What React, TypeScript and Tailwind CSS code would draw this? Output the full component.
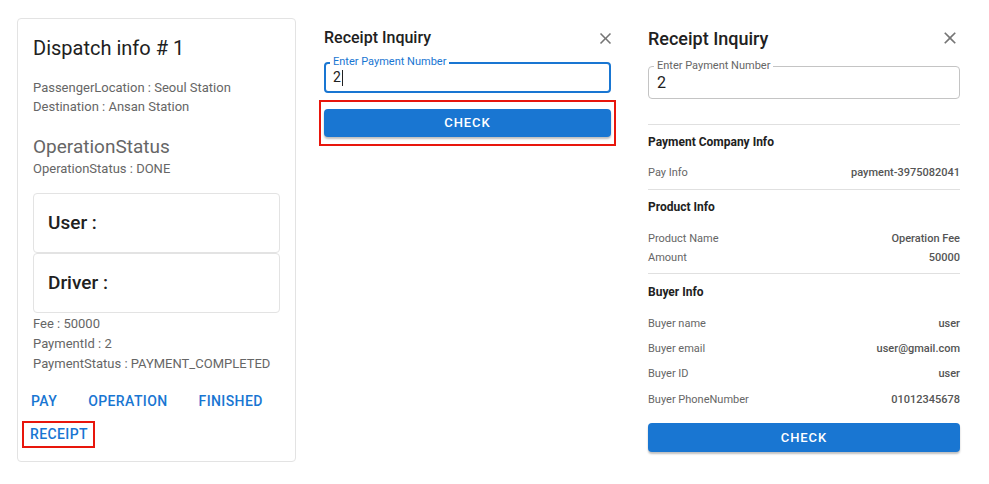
import React from "react";

const font = { fontFamily: "Roboto, 'Noto Sans', sans-serif" };

function CloseIcon({ size }: { size: number }) {
  return (
    <svg width={size} height={size} viewBox="0 0 24 24" fill="#757575">
      <path d="M19 6.41 17.59 5 12 10.59 6.41 5 5 6.41 10.59 12 5 17.59 6.41 19 12 13.41 17.59 19 19 17.59 13.41 12z" />
    </svg>
  );
}

function DispatchCard() {
  return (
    <div className="w-[279px] h-[444px] border border-[#e3e3e3] rounded-[4px] px-[15px] pt-[15px] flex flex-col shrink-0">
      <div className="text-[20px] leading-[28px] text-[#212121]">Dispatch info # 1</div>
      <div className="mt-[16px] text-[13px] leading-[19px] text-[#666]">
        <div>PassengerLocation : Seoul Station</div>
        <div>Destination : Ansan Station</div>
      </div>
      <div className="mt-[19px] text-[19px] leading-[24px] text-[#666]">OperationStatus</div>
      <div className="text-[13px] leading-[19px] text-[#666]">OperationStatus : DONE</div>
      <div className="mt-[15px] h-[60px] border border-[#e3e3e3] rounded-[4px] flex items-center px-[14px]">
        <span className="text-[19px] font-medium text-[#212121]">User :</span>
      </div>
      <div className="h-[60px] border border-[#e3e3e3] rounded-[4px] flex items-center px-[14px]">
        <span className="text-[19px] font-medium text-[#212121]">Driver :</span>
      </div>
      <div className="mt-[1px] text-[13px] leading-[20px] text-[#666]">
        <div>Fee : 50000</div>
        <div>PaymentId : 2</div>
        <div>PaymentStatus : PAYMENT_COMPLETED</div>
      </div>
      <div className="mt-[9px] h-[36px] flex items-center -ml-[2px] text-[14px] font-medium tracking-[0.4px] text-[#1976d2]">
        <span>PAY</span>
        <span className="ml-[31px]">OPERATION</span>
        <span className="ml-[31px]">FINISHED</span>
      </div>
      <div className="mt-[2px] -ml-[11px] self-start border-2 border-[#e8160c] h-[27px] pl-[6px] pr-[5px] flex items-center text-[14px] font-medium tracking-[0.4px] text-[#1976d2]">
        RECEIPT
      </div>
    </div>
  );
}

function MiddlePanel() {
  return (
    <div className="ml-[28px] w-[287px] shrink-0 flex flex-col">
      <div className="mt-[26px] h-[24px] flex items-center justify-between">
        <span className="text-[16px] font-medium text-[#212121]">Receipt Inquiry</span>
        <span className="-mr-[4px]"><CloseIcon size={19} /></span>
      </div>
      <div className="relative mt-[12px] h-[31px] border-2 border-[#1976d2] rounded-[4px] flex items-center pl-[7px]">
        <span className="absolute left-[4px] -top-[8px] px-[3px] bg-white text-[11px] leading-[12px] text-[#1976d2]">
          Enter Payment Number
        </span>
        <span className="text-[14px] text-[#212121]">2</span>
        <span className="ml-[1px] w-[1px] h-[16px] bg-[#212121]"></span>
      </div>
      <div className="mt-[7px] -mx-[5px] border-2 border-[#e8160c] px-[3px] py-[7px]">
        <div className="h-[28px] rounded-[4px] bg-[#1976d2] shadow-[0_2px_2px_rgba(0,0,0,0.25)] flex items-center justify-center text-white text-[13px] font-medium tracking-[0.9px]">
          CHECK
        </div>
      </div>
    </div>
  );
}

function Row({ label, value, className }: { label: string; value: string; className?: string }) {
  return (
    <div className={"h-[16px] flex items-center justify-between text-[11px] " + (className ?? "")}>
      <span className="text-[#666]">{label}</span>
      <span className="font-medium text-[#555]">{value}</span>
    </div>
  );
}

function ReceiptPanel() {
  return (
    <div className="ml-[37px] w-[312px] shrink-0 flex flex-col">
      <div className="mt-[26px] h-[24px] flex items-center justify-between">
        <span className="text-[18px] font-medium text-[#212121]">Receipt Inquiry</span>
        <CloseIcon size={20} />
      </div>
      <div className="relative mt-[16px] h-[33px] border border-[#c4c4c4] rounded-[4px] flex items-center pl-[8px]">
        <span className="absolute left-[5px] -top-[7px] px-[3px] bg-white text-[11px] leading-[12px] text-[#666]">
          Enter Payment Number
        </span>
        <span className="text-[16px] text-[#212121]">2</span>
      </div>
      <div className="mt-[25px] h-px bg-[#e0e0e0]"></div>
      <div className="mt-[8px] h-[18px] flex items-center text-[12px] font-bold text-[#212121]">Payment Company Info</div>
      <Row className="mt-[14px]" label="Pay Info" value="payment-3975082041" />
      <div className="mt-[8px] h-px bg-[#e0e0e0]"></div>
      <div className="mt-[8px] h-[18px] flex items-center text-[12px] font-bold text-[#212121]">Product Info</div>
      <Row className="mt-[15px]" label="Product Name" value="Operation Fee" />
      <Row className="mt-[3px]" label="Amount" value="50000" />
      <div className="mt-[7px] h-px bg-[#e0e0e0]"></div>
      <div className="mt-[9px] h-[18px] flex items-center text-[12px] font-bold text-[#212121]">Buyer Info</div>
      <Row className="mt-[15px]" label="Buyer name" value="user" />
      <Row className="mt-[9px]" label="Buyer email" value="user@gmail.com" />
      <Row className="mt-[9px]" label="Buyer ID" value="user" />
      <Row className="mt-[10px]" label="Buyer PhoneNumber" value="01012345678" />
      <div className="mt-[15px] h-[29px] rounded-[4px] bg-[#1976d2] shadow-[0_2px_2px_rgba(0,0,0,0.25)] flex items-center justify-center text-white text-[13px] font-medium tracking-[0.9px]">
        CHECK
      </div>
    </div>
  );
}

export default function App() {
  return (
    <div style={font} className="w-[989px] h-[484px] bg-white flex items-start pl-[17px] pt-[18px]">
      <DispatchCard />
      <div className="-mt-[18px] flex items-start">
        <MiddlePanel />
        <ReceiptPanel />
      </div>
    </div>
  );
}
